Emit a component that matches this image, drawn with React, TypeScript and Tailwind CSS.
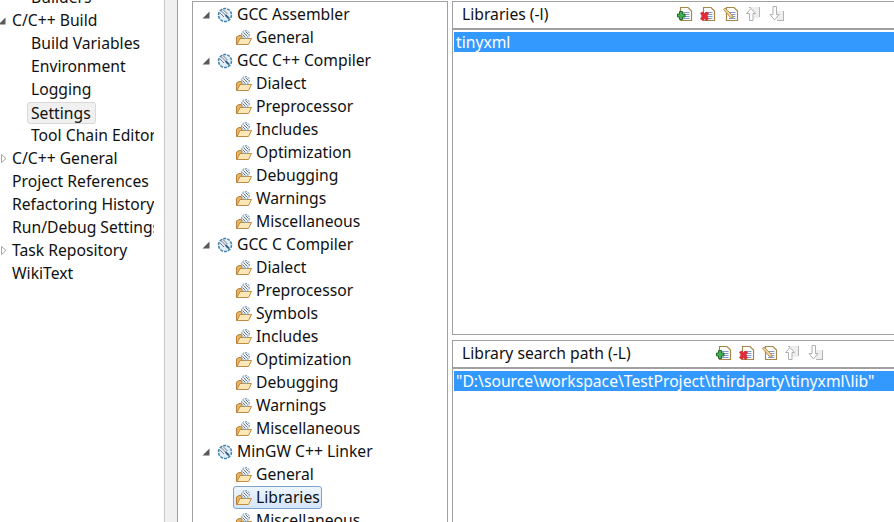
import React from "react";

const font = { fontFamily: '"Noto Sans", sans-serif' };

function Expanded({ className = "" }: { className?: string }) {
  return (
    <svg width="8" height="8" viewBox="0 0 8 8" className={className}>
      <path d="M7.5 0.5V7.5H0.5Z" fill="#595959" />
    </svg>
  );
}

function Collapsed() {
  return (
    <svg width="6" height="9" viewBox="0 0 6 9">
      <path d="M0.5 0.5L5 4.5L0.5 8.5Z" fill="#fff" stroke="#a6a6a6" />
    </svg>
  );
}

function ToolCategory() {
  return (
    <svg width="16" height="16" viewBox="0 0 16 16" className="shrink-0">
      <circle cx="8" cy="8" r="6.5" fill="#e4eef6" stroke="#3f83ad" strokeWidth="1.5" strokeDasharray="3 1" />
      <path d="M3.5 3L8.5 8M6 2.5L10.5 7M2.5 5.5L7 10" stroke="#747c88" strokeWidth="1" />
      <path d="M8.5 8L12 11.5" stroke="#2f5f88" strokeWidth="1.8" />
    </svg>
  );
}

function ToolFolder() {
  return (
    <svg width="16" height="16" viewBox="0 0 16 16" className="shrink-0">
      <path d="M0.5 14.5V7L3 5.5H6V13Z" fill="#e9b45f" stroke="#b9803a" />
      <path d="M1 14.5L4 8.5H15.5L12.5 14.5Z" fill="#fde7b6" stroke="#c48c42" />
      <circle cx="9.5" cy="4.5" r="4" fill="#eef3f7" stroke="#5f8fae" strokeDasharray="2 1" />
      <path d="M7.5 2.5L11.5 6.5M9.5 1.5L12.5 4.5M6.5 4.5L9.5 7.5" stroke="#66707c" />
    </svg>
  );
}

function Doc({ children }: { children?: React.ReactNode }) {
  return (
    <svg width="16" height="16" viewBox="0 0 16 16" className="shrink-0">
      <path d="M3.5 1.5H11L14.5 5V14.5H3.5Z" fill="#fff" stroke="#a5874a" strokeWidth="1.2" />
      <path d="M6 6.5H12.5M6 8.5H12.5M6 10.5H12.5M6 12.5H12.5" stroke="#7f9ccb" />
      {children}
    </svg>
  );
}

function AddIcon() {
  return (
    <Doc>
      <path d="M2.5 5.5H5.5V8H8V11H5.5V13.5H2.5V11H0.5V8H2.5Z" fill="#43b04f" stroke="#175f27" strokeWidth="0.9" />
    </Doc>
  );
}

function DeleteIcon() {
  return (
    <Doc>
      <path d="M0.5 7L3 6L4.5 7.5L6 6L8.5 7L7 10L8.5 13L6 14.5L4.5 12.5L3 14.5L0.5 13L2 10Z" fill="#e32c3a" stroke="#c21f2c" strokeWidth="0.6" />
    </Doc>
  );
}

function EditIcon() {
  return (
    <Doc>
      <path d="M0.5 3.5L2 2L9.5 9.5L10 12L7.5 11.5Z" fill="#f3cf94" stroke="#a98448" strokeWidth="0.8" />
    </Doc>
  );
}

function UpIcon() {
  return (
    <svg width="16" height="16" viewBox="0 0 16 16" className="shrink-0">
      <path d="M4 1H13V12H8Z" fill="#eeeeee" />
      <path d="M13.5 1V11M3 1.5H5" stroke="#b4b4b4" />
      <path d="M5 2.5L9.5 7.5H7V14.5H3.5V7.5H0.5Z" fill="#fff" stroke="#b0b0b0" />
    </svg>
  );
}

function DownIcon() {
  return (
    <svg width="16" height="16" viewBox="0 0 16 16" className="shrink-0">
      <path d="M6 5H14V14H8Z" fill="#eeeeee" />
      <path d="M14.5 5V15M8 14.5H14" stroke="#b4b4b4" />
      <path d="M4 0.5H7.5V8.5H10L5.5 14L1 8.5H4Z" fill="#fff" stroke="#b0b0b0" />
    </svg>
  );
}

function Toolbar({ className }: { className: string }) {
  return (
    <div className={`flex items-center gap-[7px] ${className}`}>
      <AddIcon />
      <DeleteIcon />
      <EditIcon />
      <UpIcon />
      <DownIcon />
    </div>
  );
}

type NavRow = { label: string; depth: 0 | 1; arrow?: "open" | "closed"; selected?: boolean };

const nav: NavRow[] = [
  { label: "Builders", depth: 1 },
  { label: "C/C++ Build", depth: 0, arrow: "open" },
  { label: "Build Variables", depth: 1 },
  { label: "Environment", depth: 1 },
  { label: "Logging", depth: 1 },
  { label: "Settings", depth: 1, selected: true },
  { label: "Tool Chain Editor", depth: 1 },
  { label: "C/C++ General", depth: 0, arrow: "closed" },
  { label: "Project References", depth: 0 },
  { label: "Refactoring History", depth: 0 },
  { label: "Run/Debug Settings", depth: 0 },
  { label: "Task Repository", depth: 0, arrow: "closed" },
  { label: "WikiText", depth: 0 },
];

const tools: { group: string; items: string[] }[] = [
  { group: "GCC Assembler", items: ["General"] },
  {
    group: "GCC C++ Compiler",
    items: ["Dialect", "Preprocessor", "Includes", "Optimization", "Debugging", "Warnings", "Miscellaneous"],
  },
  {
    group: "GCC C Compiler",
    items: ["Dialect", "Preprocessor", "Symbols", "Includes", "Optimization", "Debugging", "Warnings", "Miscellaneous"],
  },
  { group: "MinGW C++ Linker", items: ["General", "Libraries", "Miscellaneous"] },
];

export default function App() {
  return (
    <div
      style={font}
      className="flex h-[522px] w-[894px] overflow-hidden bg-white text-[15.7px] leading-[23px] text-[#111]"
    >
      {/* left property tree */}
      <div className="w-[165px] shrink-0 border-r border-[#c8c8c8] pr-[10px]">
        <div className="-mt-[14px] overflow-hidden">
          {nav.map((row) => (
            <div key={row.label} className="flex h-[23px] items-center whitespace-nowrap">
              <span className="flex w-[12px] shrink-0 items-center">
                {row.arrow === "open" && <Expanded className="-ml-[2px]" />}
                {row.arrow === "closed" && <span className="flex pl-[1px]"><Collapsed /></span>}
              </span>
              {row.depth === 1 && <span className="w-[19px] shrink-0" />}
              <span
                className={
                  row.selected
                    ? "-ml-[4px] rounded-[3px] border border-[#d9d9d9] bg-[#f0f0f0] pl-[3px] pr-[4px] leading-[20px]"
                    : ""
                }
              >
                {row.label}
              </span>
            </div>
          ))}
        </div>
      </div>

      {/* sash */}
      <div className="w-[13px] shrink-0 border-r border-[#a0a0a0] bg-[#f0f0f0]" />
      <div className="w-[14px] shrink-0" />

      {/* tool settings tree */}
      <div className="mt-[1px] w-[256px] shrink-0 overflow-hidden border-l border-t border-r border-[#a0a0a0] pl-[9px] pt-[1px]">
        {tools.map((t) => (
          <div key={t.group}>
            <div className="flex h-[23px] items-center gap-[7px] whitespace-nowrap">
              <Expanded />
              <span className="flex items-center gap-[4px]">
                <ToolCategory />
                {t.group}
              </span>
            </div>
            {t.items.map((item) => (
              <div key={item + t.group} className="flex h-[23px] items-center gap-[4px] whitespace-nowrap pl-[34px]">
                {item === "Libraries" ? (
                  <span className="-ml-[3px] flex h-[23px] items-center gap-[4px] rounded-[3px] border border-[#7da2ce] bg-linear-to-b from-[#eef5fd] to-[#d5e6fa] pl-[2px] pr-[1px]">
                    <ToolFolder />
                    {item}
                  </span>
                ) : (
                  <>
                    <ToolFolder />
                    {item}
                  </>
                )}
              </div>
            ))}
          </div>
        ))}
      </div>

      <div className="w-[4px] shrink-0" />

      {/* option lists */}
      <div className="flex min-w-0 flex-1 flex-col">
        <section className="mt-[1px] h-[334px] border-l border-t border-b border-[#a0a0a0]">
          <div className="flex h-[28px] items-center justify-between border-b-2 border-[#a0a0a0] pb-[2px] pl-[9px]">
            <span>Libraries (-l)</span>
            <Toolbar className="mr-[109px]" />
          </div>
          <div className="pl-[1px] pt-[2px]">
            <div className="h-[20px] bg-[#3399ff] pl-[2px] leading-[20px] text-white">tinyxml</div>
          </div>
        </section>
        <section className="mt-[5px] flex-1 border-l border-t border-[#a0a0a0]">
          <div className="flex h-[28px] items-center justify-between border-b-2 border-[#a0a0a0] pb-[2px] pl-[9px]">
            <span>Library search path (-L)</span>
            <Toolbar className="mr-[70px]" />
          </div>
          <div className="pl-[1px] pt-[2px]">
            <div className="h-[20px] whitespace-nowrap bg-[#3399ff] pl-[2px] leading-[20px] text-white">
              "D:\source\workspace\TestProject\thirdparty\tinyxml\lib"
            </div>
          </div>
        </section>
      </div>
    </div>
  );
}
